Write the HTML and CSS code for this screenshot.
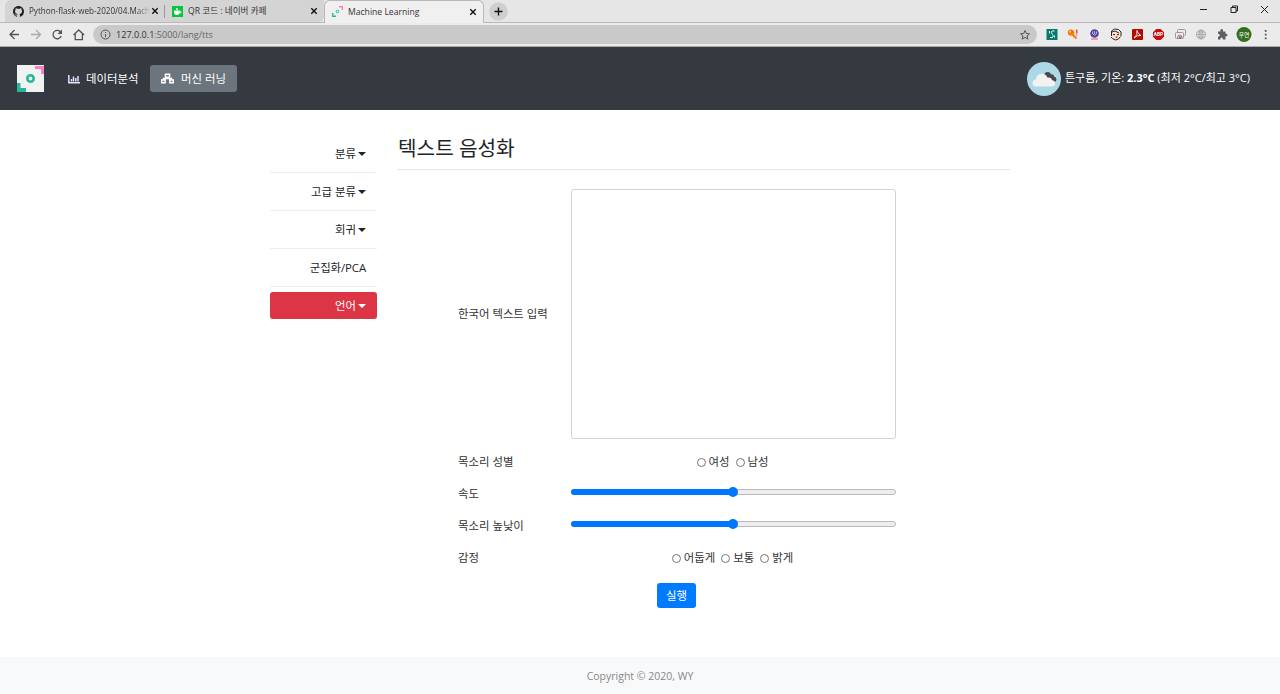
FILE: index.html
```html
<!DOCTYPE html>
<html lang="ko">
<head>
<meta charset="utf-8">
<title>Machine Learning</title>
<link rel="stylesheet" href="styles.css">
</head>
<body>
<div class="tabs">
  <div class="tab tab-one">
    <svg class="fav" viewBox="0 0 16 16"><path fill="#222" d="M8 0C3.58 0 0 3.58 0 8c0 3.54 2.29 6.53 5.47 7.59.4.07.55-.17.55-.38v-1.49c-2.01.37-2.53-.49-2.69-.94-.09-.23-.48-.94-.82-1.13-.28-.15-.68-.52-.01-.53.63-.01 1.08.58 1.23.82.72 1.21 1.87.87 2.33.66.07-.52.28-.87.51-1.07-1.78-.2-3.64-.89-3.64-3.95 0-.87.31-1.59.82-2.15-.08-.2-.36-1.02.08-2.12 0 0 .67-.21 2.2.82a7.6 7.6 0 0 1 4 0c1.53-1.04 2.2-.82 2.2-.82.44 1.1.16 1.92.08 2.12.51.56.82 1.27.82 2.15 0 3.07-1.87 3.75-3.65 3.95.29.25.54.73.54 1.48v2.19c0 .21.15.46.55.38A8 8 0 0 0 16 8c0-4.42-3.58-8-8-8z"/></svg>
    <span class="tab-title title-one">Python-flask-web-2020/04.Mach</span>
    <svg class="close" viewBox="0 0 8 8"><path d="M1.3 1.3l5.4 5.4M6.7 1.3L1.3 6.7"/></svg>
  </div>
  <div class="tab tab-two">
    <svg class="fav" viewBox="0 0 11 11"><path fill="#03c73c" d="M0 0h11v11H0z"/><path fill="#fff" d="M2 4.500h6v.7h1.300v2H7.700Q7.200 9 5 9 2 9 2 6zM4 2l1 .8L6 2v1.700H4z"/></svg>
    <span class="tab-title title-two">QR 코드 : 네이버 카페</span>
    <svg class="close" viewBox="0 0 8 8"><path d="M1.3 1.3l5.4 5.4M6.7 1.3L1.3 6.7"/></svg>
  </div>
  <div class="tab tab-active">
    <svg class="fav" viewBox="0 0 11 11"><path fill="#ff80bf" d="M7 0h4v4H9.600V1.400H7z"/><path fill="#27b899" d="M0 7h1.400v2.600H4V11H0z"/><circle cx="5.500" cy="5.500" r="1.300" fill="none" stroke="#27b899"/></svg>
    <span class="tab-title title-three">Machine Learning</span>
    <svg class="close" viewBox="0 0 8 8"><path d="M1.3 1.3l5.4 5.4M6.7 1.3L1.3 6.7"/></svg>
  </div>
  <svg class="plus" viewBox="0 0 19 19"><circle cx="9.500" cy="9.500" r="9.300" fill="#cfcfcf"/><path d="M5.500 9.500h8M9.500 5.500v8" stroke="#111" stroke-width="1.400"/></svg>
  <svg class="window-buttons" viewBox="0 0 80 20" fill="none" stroke="#222"><path d="M11 9.500h7M42 7.500h5v5h-5zM43.500 7.500v-1.500h5v5H47M72 6l7 7M79 6l-7 7"/></svg>
</div>
<div class="toolbar">
  <svg class="nav-icons" viewBox="0 0 93 24" fill="none" stroke="#50545a" stroke-width="1.300"><path d="M19 11.500H10.500M14.500 7l-4.500 4.500 4.500 4.500"/><path stroke="#aaa" d="M31 11.500h9M36 7l4.500 4.500L36 16"/><path d="M61 9.600A4.200 4.200 0 1 0 61.200 13"/><path fill="#50545a" stroke="none" d="M62 6.500V11h-4.500z"/><path d="M73.500 12l5.300-5 5.300 5M75.200 11v5.600h7.200V11"/></svg>
  <div class="address">
    <svg class="info" viewBox="0 0 11 11" fill="none" stroke="#555"><circle cx="5.500" cy="5.500" r="4.500"/><path d="M5.500 5v3M5.500 3v1"/></svg>
    <span class="url"><b>127.0.0.1</b>:5000/lang/tts</span>
    <svg class="star" viewBox="0 0 12 12"><path d="M6 1.500l1.300 3 3.200.3-2.400 2.100.7 3.200L6 8.400l-2.800 1.700.7-3.200-2.400-2.100 3.200-.3z"/></svg>
  </div>
  <svg class="extensions" viewBox="1040 0 236 24">
    <path fill="#08796d" d="M1046.500 6h11v11h-11z"/><path d="M1054.500 8q-3-.8-3 1.200 0 1.300 1 2.300t.5 2.500q-.8 1-3 .5M1049.500 8v2.500m5 2v2" stroke="#e4fffb" fill="none"/>
    <circle cx="1071" cy="9.600" r="3.200" fill="#ff7b00"/><circle cx="1070" cy="8.700" r=".8" fill="#eee"/><path d="M1072 11l4.500 4.500" stroke="#ff7b00" stroke-width="2"/><path d="M1076.800 6.500v4M1076.800 11.500v1" stroke="#df292e" stroke-width="1.200"/>
    <path fill="#f5f5fa" d="M1089.500 6h10v11h-10z"/><circle cx="1094.500" cy="10.500" r="4.300" fill="#55439b"/><path d="M1092.500 8.500v2.200q2 3 4 0V8.500M1094.500 8v3" stroke="#d9d3ee" fill="none" stroke-width=".8"/><path d="M1091 16h7" stroke="#e34b61"/>
    <path fill="#ffe1cf" d="M1112 8h8v6l-2 2.500h-4l-2-2z"/><path d="M1111.500 13V8l3-2 4 .5 2.500 2.500v4M1112 9l3-1 4 2M1113 12l1-.8 1 .8m2 0l1-.8 1 .8M1111 14l1.500 1.500 3 1.500 3-1 2-2.500" stroke="#262626" fill="none"/><circle cx="1116.500" cy="14" r="1" fill="#db4b3c"/>
    <rect x="1132" y="6" width="11" height="11" rx="1" fill="#b30b00"/><path d="M1137 7.500q1 4 4 5-4-.5-7 2.500 4-3 3-7.500z" stroke="#fff" fill="none" stroke-width=".9"/>
    <path fill="#c70d0e" d="M1156.300 6h4.400l3.300 3.300v4.400l-3.300 3.300h-4.400l-3.300-3.300V9.300z"/><text x="1158.500" y="13.400" class="abp">ABP</text>
    <rect x="1177.500" y="6.500" width="8" height="6" rx="1" fill="#e9e9e9" stroke="#999"/><rect x="1175.500" y="9.500" width="8" height="6" rx="1" fill="#eee" stroke="#999"/><path d="M1177.500 15q0-3 2.300-3t2.300 3" fill="none" stroke="#df5c50"/><circle cx="1180" cy="14.500" r="1.200" fill="#387ed1"/>
    <g fill="none" stroke="#aaa"><circle cx="1201" cy="11.500" r="4.500"/><ellipse cx="1201" cy="11.500" rx="2" ry="4.500"/><path d="M1196.500 11.500h9M1197.300 9h7.400M1197.300 14h7.400M1201 7v9"/></g>
    <path fill="#5b5f64" d="M1218 8.500h2.500q-.7-2.500 1.200-2.500t1.300 2.500h2.500v2.200q2-.3 2 1.200t-2 1.200v3.400h-2.600q-.1-2-1.300-2t-1.300 2H1218v-2.700q1.800-.1 1.800-1.500t-1.800-1.500z"/>
    <circle cx="1244" cy="11.500" r="7.500" fill="#356d20"/><text x="1244" y="13.700" class="avatar">우연</text>
    <path fill="#50545a" d="M1264.800 7h1.800v1.800h-1.800zM1264.800 10.700h1.800v1.800h-1.800zM1264.800 14.400h1.800v1.800h-1.800z"/>
  </svg>
</div>
<header class="navbar">
  <svg class="logo" viewBox="0 0 27 27"><path fill="#f1f3f3" d="M0 0h27v27H0z"/><path fill="#ff80bf" d="M18 1h9v8h-3V4h-6z"/><path fill="#27b899" d="M0 18h3.500v5H9v4H0z"/><circle cx="13.500" cy="13.500" r="3.200" fill="none" stroke="#27b899" stroke-width="2.600"/></svg>
  <nav class="menu">
    <a class="item"><svg class="chart" viewBox="0 0 12 10"><path d="M.8 1v7.800H12M3.500 7.500V5M5.500 7.500v-5M7.800 7.500V4M10 7.500V2" fill="none" stroke="#dfe1ff" stroke-width="1.500"/></svg><span>데이터분석</span></a>
    <a class="item chosen"><svg class="network" viewBox="0 0 14 11"><path d="M4.800.8h4.400v3.400H4.800zM.8 7h3.700v3.200H.8zM9.500 7h3.700v3.200H9.500zM7 4v1.700M2.700 7V5.600h8.600V7" fill="none" stroke="#fff" stroke-width="1.600"/></svg><span>머신 러닝</span></a>
  </nav>
  <div class="weather">
    <svg class="cloud" viewBox="0 0 34 34"><circle cx="17" cy="17" r="17" fill="#add8e6"/><path fill="#484848" d="M17 14q0-4 4-4 2 0 3 2.200 3-.1 3 2.300 2.500.7 2.500 3t-2.500 2.500h-3z"/><path fill="#f2f2f2" d="M9 24.500a3.500 3.500 0 0 1 0-7q.6-5.800 6-5.800 4 0 5.600 4 3.800-.8 4.600 2.500 2.900.3 2.900 3t-3 3.300z"/></svg>
    <span class="weather-text">튼구름, 기온: <b>2.3°C</b> (최저 2°C/최고 3°C)</span>
  </div>
</header>
<main class="page">
  <aside class="side">
    <a class="side-item">분류<i class="caret"></i></a>
    <a class="side-item">고급 분류<i class="caret"></i></a>
    <a class="side-item">회귀<i class="caret"></i></a>
    <a class="side-item"><span class="pca">군집화/PCA</span></a>
    <a class="side-item selected">언어<i class="caret"></i></a>
  </aside>
  <section class="content">
    <h1>텍스트 음성화</h1>
    <form class="form">
      <label class="first">한국어 텍스트 입력</label><textarea></textarea>
      <label>목소리 성별</label><div class="choices"><i class="radio"></i><span>여성</span><i class="radio"></i><span>남성</span></div>
      <label>속도</label><div class="slider"><i class="fill"></i><i class="thumb"></i></div>
      <label>목소리 높낮이</label><div class="slider"><i class="fill"></i><i class="thumb"></i></div>
      <label>감정</label><div class="choices"><i class="radio"></i><span>어둡게</span><i class="radio"></i><span>보통</span><i class="radio"></i><span>밝게</span></div>
    </form>
    <button type="button" class="run">실행</button>
  </section>
</main>
<footer><span>Copyright © 2020, WY</span></footer>
</body>
</html>
```

FILE: styles.css
```css
* { box-sizing: border-box; }
body { margin: 0; height: 694px; overflow: hidden; display: flex; flex-direction: column; background: #fff; color: #212529; font: 11.400px/16px "Open Sans", "Noto Sans CJK KR", sans-serif; }
svg { display: block; flex: none; }
.tabs { height: 23px; background: #e6e6e6; border-bottom: 1px solid #b9b9b9; display: flex; flex: none; padding-left: 5px; }
.tab { height: 22px; display: flex; align-items: center; background: #d4d4d4; flex: none; color: #333; }
.tab-one { width: 160px; padding-left: 8px; border-radius: 6px 0 0 0; background: linear-gradient(#999, #999) 100% 50% / 1px 13px no-repeat #d4d4d4; }
.tab-two { width: 159px; padding-left: 7px; border-radius: 0 0 6px 0; }
.tab-active { width: 160px; height: 23px; padding-left: 7px; padding-bottom: 1px; background: #f0f0f0; border: 1px solid #b9b9b9; border-bottom: 0; border-radius: 6px 6px 0 0; }
.fav { width: 11px; height: 11px; margin-right: 5px; }
.tab-title { flex: 1; white-space: nowrap; font-size: 8.600px; }
.title-one { font-size: 8.100px; -webkit-mask-image: linear-gradient(90deg, #000 88%, transparent 100%); mask-image: linear-gradient(90deg, #000 88%, transparent 100%); }
.close { width: 8px; height: 8px; margin-right: 6px; stroke: #111; stroke-width: 1.400; }
.plus { width: 19px; height: 19px; margin: 2px 0 0 5px; }
.window-buttons { width: 80px; height: 20px; margin-left: auto; margin-right: 11px; }
.toolbar { height: 24px; background: #ebebeb; display: flex; flex: none; border-bottom: 1px solid #aaa; }
.nav-icons { width: 93px; height: 24px; }
.address { width: 944px; height: 19px; margin-top: 2px; border-radius: 10px; background: #c9c9c9; display: flex; align-items: center; padding: 0 6px 0 7px; flex: none; }
.info { width: 11px; height: 11px; }
.url { margin-left: 5px; font-size: 9.100px; color: #666; }
.url b { font-weight: 400; color: #333; }
.star { width: 12px; height: 12px; margin-left: auto; fill: none; stroke: #555; }
.extensions { width: 236px; height: 24px; margin-left: 3px; }
.abp { font: bold 4.800px Roboto, sans-serif; fill: #fff; text-anchor: middle; }
.avatar { font: 5.800px "Noto Sans CJK KR", sans-serif; fill: #fff; text-anchor: middle; }
.navbar { height: 63px; flex: none; background: #343a40; color: #fff; display: flex; align-items: center; padding: 0 30px 0 17px; }
.logo { width: 27px; height: 27px; }
.menu { display: flex; margin-left: 16px; gap: 3px; }
.item { height: 27px; display: flex; align-items: center; padding: 0 8px; white-space: nowrap; }
.item:first-child { width: 87px; }
.chosen { width: 87px; background: #6c757d; border-radius: 3px; padding-left: 11px; }
.chart { width: 12px; height: 10px; margin-right: 6px; }
.network { width: 13px; height: 11px; margin-right: 7px; }
.weather { margin-left: auto; display: flex; align-items: center; }
.cloud { width: 34px; height: 34px; margin-right: 4px; }
.weather-text { width: 185px; white-space: nowrap; font-size: 11px; padding-bottom: 2px; }
.page { height: 547px; flex: none; display: flex; padding: 30px 0 0 270px; }
.side { width: 107px; margin-right: 20px; }
.side-item { height: 38px; display: flex; align-items: center; justify-content: flex-end; padding-right: 11px; border-bottom: 1px solid #eee; }
.side-item:first-child { height: 33px; padding-bottom: 5px; }
.pca { letter-spacing: -.1px; }
.caret { width: 0; height: 0; margin-left: 2px; border: 4px solid transparent; border-top-color: currentColor; border-bottom: 0; }
.side .selected { height: 27px; margin-top: 5px; background: #dc3545; color: #fff; border: 0; border-radius: 3px; }
.content { width: 613px; }
h1 { height: 30px; margin: 0 0 19px; padding: 0 0 0 1px; border-bottom: 1px solid #e5e5e5; font-size: 20.200px; line-height: 16px; font-weight: 400; }
.form { display: grid; grid-template-columns: 114px 325px; grid-template-rows: 257px repeat(4, 32px); margin: 0 0 0 60px; color: #333; }
label { padding-left: 1px; align-self: center; white-space: nowrap; }
.first { padding-bottom: 7px; }
textarea { height: 250px; border: 1px solid #ced4da; border-radius: 3px; resize: none; }
.choices { display: flex; align-items: center; justify-content: center; }
.radio { width: 9px; height: 9px; border: 1px solid #777; border-radius: 50%; margin-right: 3px; }
.choices span { margin-right: 6px; }
.choices span:last-child { margin-right: 2px; }
.slider { height: 6px; margin-bottom: 4px; align-self: center; border: 1px solid #bbb; border-radius: 4px; background: #eee; display: flex; align-items: center; }
.fill { width: 160px; height: 6px; margin: 0 -3px 0 -1px; flex: none; background: #0075ff; border-radius: 3px; }
.thumb { width: 10px; height: 10px; flex: none; border-radius: 50%; background: #0075ff; }
.run { display: block; width: 39px; height: 25px; margin: 9px 0 0 260px; padding: 0; border: 0; border-radius: 3px; background: #007bff; color: #fff; font: inherit; }
footer { height: 37px; flex: none; background: #f8f9fa; color: #888; display: flex; align-items: center; justify-content: center; font-size: 10.500px; }
```
